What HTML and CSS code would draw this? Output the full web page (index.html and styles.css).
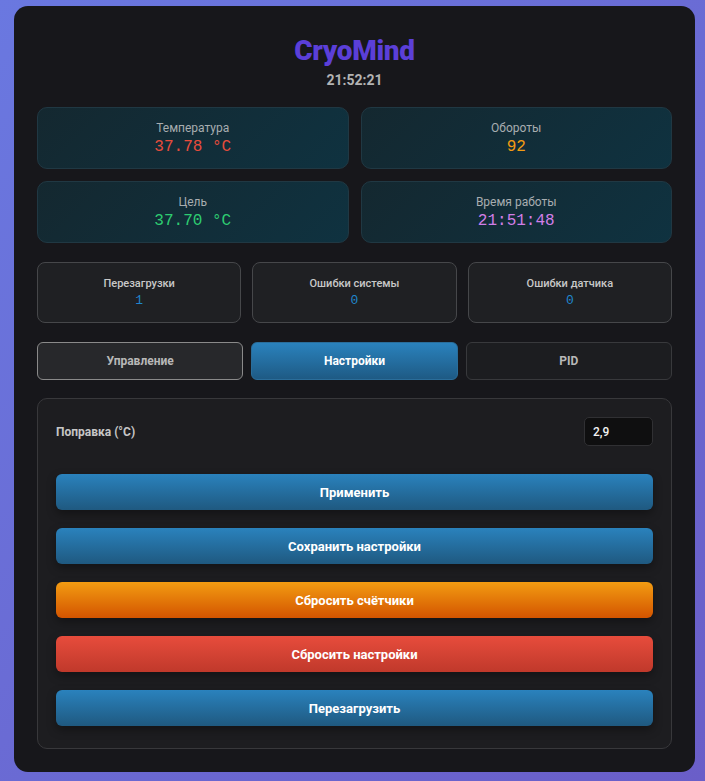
FILE: index.html
```html
<!DOCTYPE html>
<html lang="ru">
<head>
<meta charset="utf-8">
<title>CryoMind</title>
<link rel="stylesheet" href="styles.css">
</head>
<body>
<div class="app">
  <header class="head">
    <h1 class="title">CryoMind</h1>
    <div class="clock">21:52:21</div>
  </header>

  <section class="stats">
    <div class="stat"><div class="stat-label">Температура</div><div class="stat-value v-red">37.78 °C</div></div>
    <div class="stat"><div class="stat-label">Обороты</div><div class="stat-value v-orange">92</div></div>
    <div class="stat"><div class="stat-label">Цель</div><div class="stat-value v-green">37.70 °C</div></div>
    <div class="stat"><div class="stat-label">Время работы</div><div class="stat-value v-purple">21:51:48</div></div>
  </section>

  <section class="counters">
    <div class="counter"><div class="counter-label">Перезагрузки</div><div class="counter-value">1</div></div>
    <div class="counter"><div class="counter-label">Ошибки системы</div><div class="counter-value">0</div></div>
    <div class="counter"><div class="counter-label">Ошибки датчика</div><div class="counter-value">0</div></div>
  </section>

  <nav class="tabs">
    <button class="tab tab-hover">Управление</button>
    <button class="tab tab-active">Настройки</button>
    <button class="tab">PID</button>
  </nav>

  <section class="panel">
    <div class="field">
      <label class="field-label">Поправка (°C)</label>
      <input class="field-input" type="text" value="2,9">
    </div>
    <button class="btn btn-blue">Применить</button>
    <button class="btn btn-blue">Сохранить настройки</button>
    <button class="btn btn-orange">Сбросить счётчики</button>
    <button class="btn btn-red">Сбросить настройки</button>
    <button class="btn btn-blue">Перезагрузить</button>
  </section>
</div>
</body>
</html>
```
FILE: styles.css
```css
* { box-sizing: border-box; }
html, body { height: 100%; }
body {
  margin: 0;
  padding: 6px 10px 9px 14px;
  background: linear-gradient(135deg, #6a78e0 0%, #6a5ec8 100%);
  font-family: Roboto, "Liberation Sans", sans-serif;
  overflow: hidden;
}
.app {
  width: 681px;
  height: 766px;
  background: #17171b;
  border-radius: 14px;
  padding: 0 23px 0 23px;
  display: flex;
  flex-direction: column;
}
.head {
  text-align: center;
  padding-top: 29px;
}
.title {
  margin: 0;
  font-size: 28px;
  line-height: 32px;
  font-weight: 900;
  color: #5b3fd8;
  letter-spacing: -0.3px;
}
.clock {
  margin-top: 4px;
  font-size: 14px;
  font-weight: 700;
  color: #b3b3b3;
  line-height: 18px;
}
.stats {
  margin-top: 18px;
  display: grid;
  grid-template-columns: 1fr 1fr;
  gap: 12px;
}
.stat {
  height: 62px;
  border-radius: 10px;
  border: 1px solid #203843;
  background: linear-gradient(135deg, #142830 0%, #0f3240 100%);
  display: flex;
  flex-direction: column;
  align-items: center;
  justify-content: center;
  padding-top: 1px;
}
.stat-label {
  font-size: 12px;
  color: #a8adb0;
  line-height: 15px;
}
.stat-value {
  font-family: "Liberation Mono", "Courier New", monospace;
  font-size: 16px;
  line-height: 20px;
  margin-top: 1px;
}
.v-red { color: #e74c3c; }
.v-orange { color: #f39c12; }
.v-green { color: #2ecc71; }
.v-purple { color: #d17ee8; }

.counters {
  margin-top: 19px;
  display: grid;
  grid-template-columns: repeat(3, 1fr);
  gap: 11px;
}
.counter {
  height: 61px;
  border: 1px solid #46474a;
  border-radius: 8px;
  background: #1f2023;
  display: flex;
  flex-direction: column;
  align-items: center;
  justify-content: center;
}
.counter-label {
  font-size: 11px;
  font-weight: 500;
  color: #c8c8c8;
  line-height: 14px;
}
.counter-value {
  margin-top: 2px;
  font-family: "Liberation Mono", "Courier New", monospace;
  font-size: 13px;
  line-height: 16px;
  color: #1f86cc;
}
.tabs {
  margin-top: 19px;
  display: grid;
  grid-template-columns: repeat(3, 1fr);
  gap: 8px;
}
.tab {
  height: 38px;
  border-radius: 6px;
  border: 1px solid #38393c;
  background: #1c1d20;
  color: #b8b8b8;
  font-family: inherit;
  font-size: 12px;
  font-weight: 700;
}
.tab-hover {
  background: #27282b;
  border-color: #8a8a8a;
}
.tab-active {
  background: linear-gradient(180deg, #2a82bd 0%, #1e5a84 100%);
  border-color: #2a6d9a;
  color: #ffffff;
}
.panel {
  margin-top: 18px;
  border: 1px solid #38383b;
  border-radius: 10px;
  background: #1d1d20;
  padding: 18px 18px 22px;
  display: flex;
  flex-direction: column;
  gap: 18px;
}
.field {
  display: flex;
  align-items: center;
  justify-content: space-between;
  margin-bottom: 10px;
}
.field-label {
  font-size: 12px;
  font-weight: 700;
  color: #c6c6c6;
}
.field-input {
  width: 69px;
  height: 29px;
  background: #0f0f10;
  border: 1px solid #303033;
  border-radius: 5px;
  color: #f2f2f2;
  font-family: inherit;
  font-size: 12px;
  font-weight: 500;
  padding: 0 8px;
  outline: none;
}
.btn {
  height: 36px;
  border: none;
  border-radius: 6px;
  color: #ffffff;
  font-family: inherit;
  font-size: 13px;
  font-weight: 700;
  box-shadow: 0 4px 10px rgba(0, 0, 0, 0.35);
}
.btn-blue { background: linear-gradient(180deg, #2a82bd 0%, #1f5980 100%); }
.btn-orange { background: linear-gradient(180deg, #f39c12 0%, #d35400 100%); }
.btn-red { background: linear-gradient(180deg, #e74c3c 0%, #c0392b 100%); }
```
